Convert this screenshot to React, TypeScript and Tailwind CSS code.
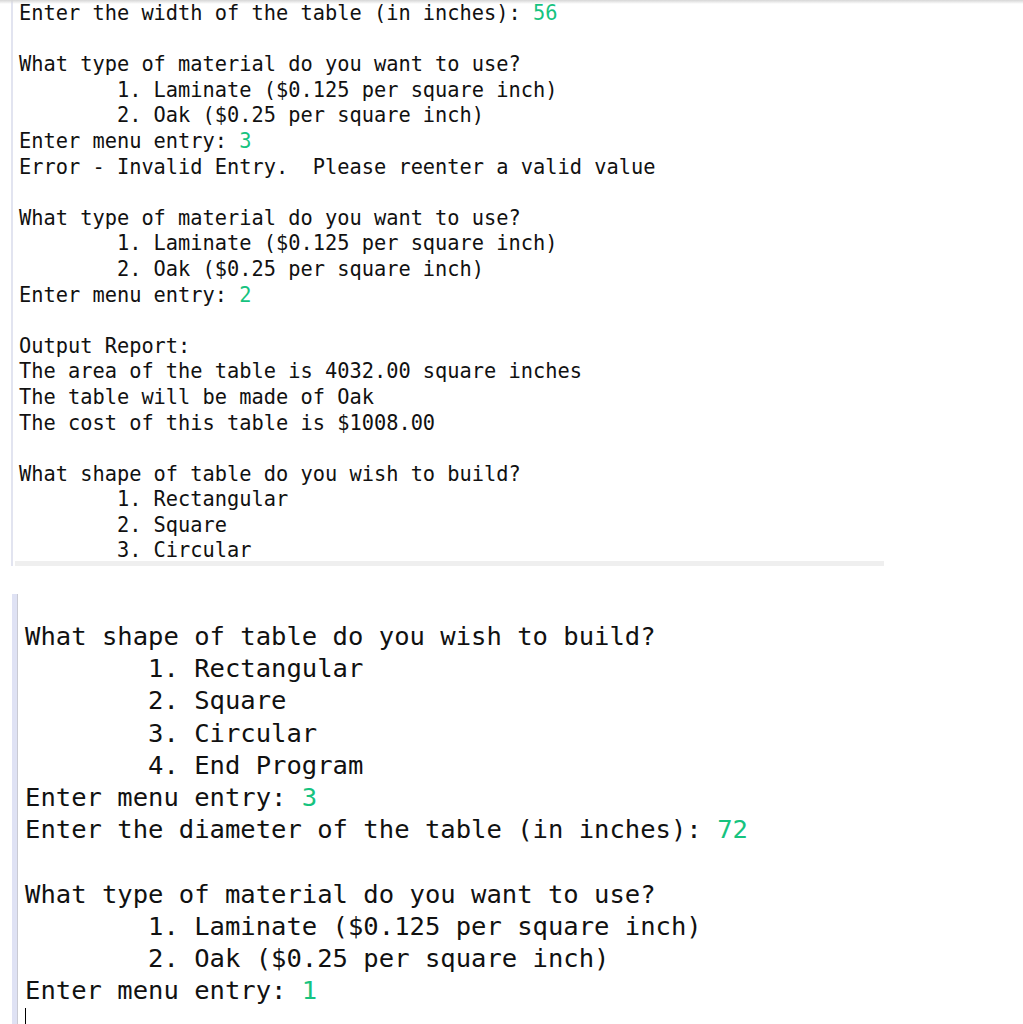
const topLines: { text: string; input?: string }[] = [
  { text: "Enter the width of the table (in inches): ", input: "56" },
  { text: "" },
  { text: "What type of material do you want to use?" },
  { text: "        1. Laminate ($0.125 per square inch)" },
  { text: "        2. Oak ($0.25 per square inch)" },
  { text: "Enter menu entry: ", input: "3" },
  { text: "Error - Invalid Entry.  Please reenter a valid value" },
  { text: "" },
  { text: "What type of material do you want to use?" },
  { text: "        1. Laminate ($0.125 per square inch)" },
  { text: "        2. Oak ($0.25 per square inch)" },
  { text: "Enter menu entry: ", input: "2" },
  { text: "" },
  { text: "Output Report:" },
  { text: "The area of the table is 4032.00 square inches" },
  { text: "The table will be made of Oak" },
  { text: "The cost of this table is $1008.00" },
  { text: "" },
  { text: "What shape of table do you wish to build?" },
  { text: "        1. Rectangular" },
  { text: "        2. Square" },
  { text: "        3. Circular" },
];

const bottomLines: { text: string; input?: string }[] = [
  { text: "What shape of table do you wish to build?" },
  { text: "        1. Rectangular" },
  { text: "        2. Square" },
  { text: "        3. Circular" },
  { text: "        4. End Program" },
  { text: "Enter menu entry: ", input: "3" },
  { text: "Enter the diameter of the table (in inches): ", input: "72" },
  { text: "" },
  { text: "What type of material do you want to use?" },
  { text: "        1. Laminate ($0.125 per square inch)" },
  { text: "        2. Oak ($0.25 per square inch)" },
  { text: "Enter menu entry: ", input: "1" },
];

const ConsoleLine = ({ text, input }: { text: string; input?: string }) => (
  <div className="whitespace-pre">
    {text}
    {input && <span className="text-[#16c37f]">{input}</span>}
    {!text && !input && " "}
  </div>
);

export default function App() {
  return (
    <div className="relative min-h-[1024px] bg-white text-[#111] font-['DejaVu_Sans_Mono','Liberation_Mono',monospace]">
      <div className="absolute inset-x-0 top-0 h-[4px] bg-gradient-to-b from-[#d6d6d6] to-transparent" />

      {/* first console capture */}
      <div className="ml-[11px] w-[873px] border-l-2 border-[#e2e4f0]">
        <div className="h-[561px] overflow-hidden pl-[6px] pt-px text-[20.33px] leading-[25.6px]">
          {topLines.map((line, i) => (
            <ConsoleLine key={i} {...line} />
          ))}
        </div>
        <div className="ml-[2px] h-[5px] bg-[#efefef]" />
      </div>

      {/* second console capture */}
      <div className="ml-[12px] mt-[28px] flex">
        <div className="w-[6px] shrink-0 border-r border-[#c9cad3] bg-[#dfe2f4]" />
        <div className="pl-[7px] pt-[26px] text-[25.55px] leading-[32.2px]">
          {bottomLines.map((line, i) => (
            <ConsoleLine key={i} {...line} />
          ))}
          <div className="h-[20px] pt-[2px]">
            <span className="block h-[18px] w-px bg-black" />
          </div>
        </div>
      </div>
    </div>
  );
}
